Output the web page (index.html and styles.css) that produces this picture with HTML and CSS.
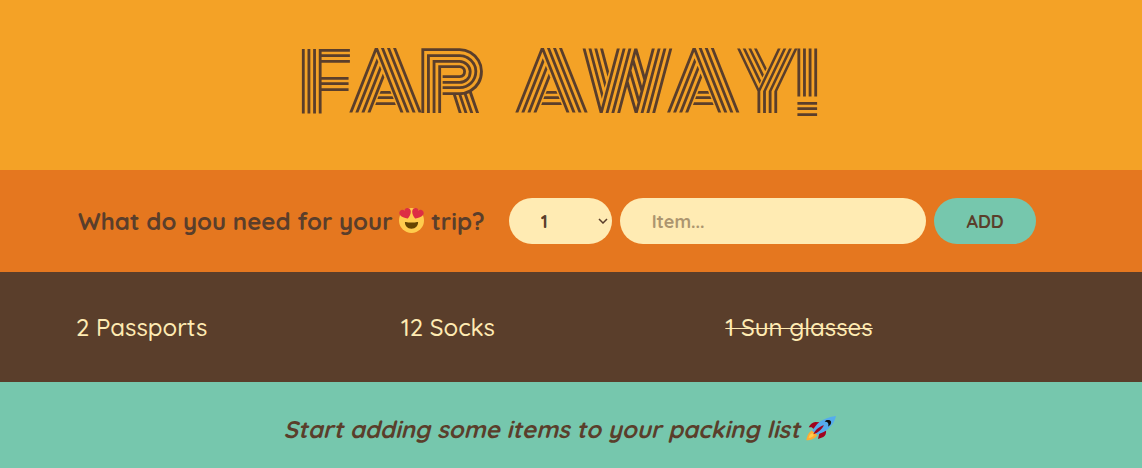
FILE: index.html
```html
<!DOCTYPE html>
<html lang="en">
<head>
<meta charset="utf-8">
<meta name="viewport" content="width=device-width, initial-scale=1">
<title>Far Away</title>
<link rel="stylesheet" href="styles.css">
</head>
<body>
<div class="app">
  <header class="banner"><h1 class="title">FAR AWAY!</h1></header>
  <form class="add-form">
    <label class="question" for="item">What do you need for your
      <svg class="emoji" viewBox="0 0 36 36" role="img" aria-label="heart eyes"><circle cx="18" cy="18" r="18" fill="#ffcc4d"/><path fill="#664500" d="M18 21c-4 0-6-.5-8-1-1 0-1.500 0-1.500 1 0 4 3.500 9 9.500 9s9.500-5 9.500-9c0-1-.5-1-1.500-1-2 .5-4 1-8 1z"/><path fill="#dd2e44" d="M16.650 3.280C15.790.85 13.120-.42 10.690.440 9.220.960 8.180 2.160 7.760 3.550 6.570 2.720 5.010 2.410 3.540 2.930 1.110 3.790-.17 6.460.690 8.890c.120.350.290.670.480.970 2 3.130 7.600 5.370 11.550 5.170 2.950-2.620 4.930-8.320 4.080-11.230zM19.350 3.280c.860-2.430 3.530-3.700 5.960-2.840 1.470.520 2.510 1.720 2.930 3.110 1.190-.83 2.750-1.140 4.220-.62 2.430.860 3.710 3.530 2.850 5.960-.12.350-.29.670-.48.970-2 3.130-7.600 5.370-11.550 5.170-2.950-2.620-4.930-8.320-4.080-11.230z"/></svg>
      trip?</label>
    <select class="field quantity" aria-label="Quantity"><option>1</option><option>2</option><option>3</option><option>4</option><option>5</option></select>
    <input class="field item-name" id="item" type="text" placeholder="Item...">
    <button class="field add" type="submit">ADD</button>
  </form>
  <main class="list">
    <ul class="items">
      <li>2 Passports</li>
      <li>12 Socks</li>
      <li><span class="packed">1 Sun glasses</span></li>
    </ul>
  </main>
  <footer class="stats">
    <em>Start adding some items to your packing list</em>
    <svg class="rocket" viewBox="0 0 90 75" role="img" aria-label="rocket"><path fill="#a0041e" d="M8 34q8-15 20-16l14 1-19 20-6-5zM36 69l4-17 20-9q2 14-8 20z"/><path fill="#ffac33" d="M21 43C8 46 3 60 1 73c14 0 29-5 34-18z"/><path fill="#ffcc4d" d="M20 52c-7 1-11 7-12 14 8-1 14-4 16-10z"/><path fill="#55acee" d="M90 0C66 3 45 12 33 25L18 44l15 12 20-8C74 36 86 19 90 0z"/><path fill="#a0041e" d="M22 55c5-12 16-23 32-27-6 12-16 22-32 27z"/><path fill="#111" d="M60 13c11-4 20 2 13 13l-7 6c3-9 1-15-10-15z"/></svg>
  </footer>
</div>
</body>
</html>
```
FILE: styles.css
```css
* { box-sizing: border-box; margin: 0; padding: 0; }

body {
  background: #76c7ad;
  color: #5a3e2b;
  font-family: Quicksand, Inter, "Open Sans", sans-serif;
  font-size: 24px;
  font-weight: 500;
  line-height: 32px;
}

.app { min-height: 100vh; display: flex; flex-direction: column; }

.banner {
  background: #f4a226;
  padding: 23px 28px 27px 0;
  text-align: center;
}

.title {
  font-family: Monoton, Inter, sans-serif;
  font-size: 80px;
  font-weight: 400;
  line-height: 120px;
  letter-spacing: -5px;
  word-spacing: 30px;
}

.add-form {
  display: flex;
  align-items: center;
  gap: 8px;
  padding: 28px 106px 28px 78px;
  background: #e5771f;
}

.question {
  margin-right: 16px;
  font-weight: 700;
  white-space: nowrap;
}

.emoji { width: 25px; height: 25px; vertical-align: -3px; }

.field {
  height: 46px;
  padding: 0 32px;
  border: 0;
  border-radius: 23px;
  background: #ffebb3;
  color: #5a3e2b;
  font-family: inherit;
  font-size: 18px;
  font-weight: 700;
}

.quantity {
  width: 103px;
  padding-right: 16px;
  appearance: none;
  background: #ffebb3 url("data:image/svg+xml,%3Csvg xmlns='http://www.w3.org/2000/svg' width='10' height='6'%3E%3Cpath d='M1 1l4 4 4-4' fill='none' stroke='%235a3e2b' stroke-width='1.5'/%3E%3C/svg%3E") no-repeat right 4px center;
}

.item-name { flex: 1; min-width: 0; }
.item-name::placeholder { color: #ac956f; opacity: 1; }
.add { width: 102px; background: #76c7ad; }

.list {
  padding: 39px 92px 39px 76px;
  background: #5a3e2b;
  color: #ffebb3;
}

.items {
  display: grid;
  grid-template-columns: repeat(3, 1fr);
  list-style: none;
}

.packed { text-decoration: line-through 1px; }

.stats {
  padding: 31px 22px 23px 0;
  text-align: center;
  font-weight: 700;
}

.rocket { width: 30px; height: 25px; vertical-align: -3px; }
```
